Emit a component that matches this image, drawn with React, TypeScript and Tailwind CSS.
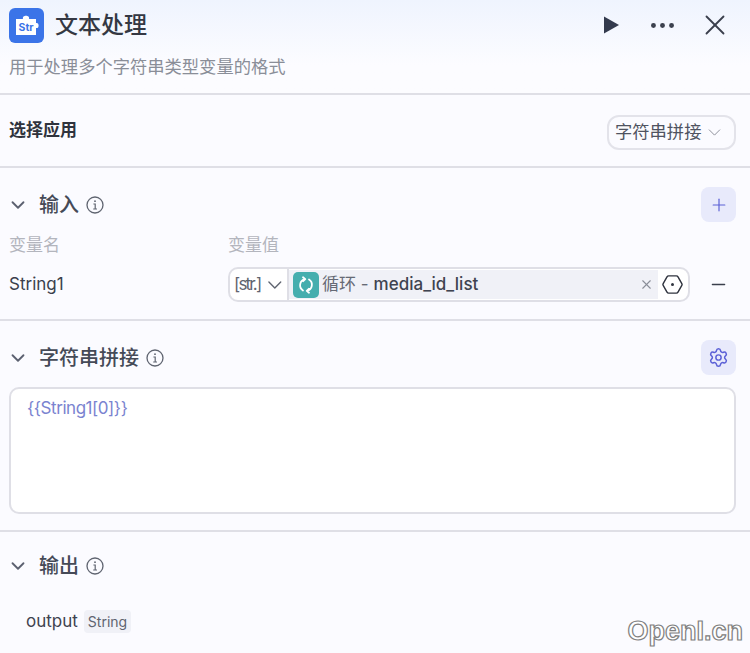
import React from 'react';
import { ChevronDown, Plus, Minus, Settings, X, Ellipsis, Hexagon } from 'lucide-react';

const InfoMark = () => (
  <svg width="18" height="18" viewBox="0 0 18 18" fill="none" stroke="#5f6470" strokeWidth="1.3" className="ml-[7px]">
    <circle cx="9" cy="9" r="8" />
    <circle cx="9" cy="5.2" r="0.9" fill="#5f6470" stroke="none" />
    <path d="M7.4 8h1.8v5M7.2 13h3.8" strokeWidth="1.2" />
  </svg>
);

const SectionTitle = ({ title }: { title: string }) => (
  <div className="flex items-center">
    <ChevronDown size={22} strokeWidth={2} className="text-[#5b6070] ml-[7px]" />
    <span className="ml-[10px] text-[20px] leading-[34px] font-medium text-[#454a57]">{title}</span>
    <InfoMark />
  </div>
);

const IconTile = ({ children }: { children: React.ReactNode }) => (
  <button className="w-[35px] h-[35px] rounded-lg bg-[#e8eafb] flex items-center justify-center text-[#5b60d6]">
    {children}
  </button>
);

export default function App() {
  return (
    <div className="relative w-[750px] h-[653px] overflow-hidden bg-[#fbfbff] font-['Inter','Noto_Sans_CJK_SC',sans-serif]">
      {/* header */}
      <div className="h-[95px] border-b-2 border-[#dfdfe6] bg-gradient-to-b from-[#eff4fe] to-[#fcfcff] to-70%">
        <div className="flex items-center h-[50px] pl-[9px] pr-[18px]">
          <div className="w-[35px] h-[35px] rounded-md bg-[#3b74e8] flex items-center justify-center">
            <svg width="27" height="27" viewBox="0 0 27 27">
              <path d="M3 7h7c-1.500-4.500 7.500-4.500 6 0h7v4c3.500-1 3.500 6 0 5v7H3z" fill="#ffffff" />
              <text x="13" y="18.500" textAnchor="middle" fontSize="10.500" fontWeight="700" fill="#3b74e8" fontFamily="Inter">Str</text>
            </svg>
          </div>
          <span className="ml-[11px] text-[23px] font-medium text-[#343843]">文本处理</span>
          <div className="ml-auto flex items-center">
            <svg width="15" height="18" viewBox="0 0 15 18"><path d="M0 0.500L15 9L0 17.500z" fill="#333a4d" /></svg>
            <Ellipsis size={31} strokeWidth={1.8} className="ml-[28px] text-[#3a3f4c]" />
            <X size={34} strokeWidth={1.3} className="ml-[20px] text-[#3a3f4c]" />
          </div>
        </div>
        <p className="pl-[9px] mt-[5px] text-[17.300px] leading-[24px] text-[#8a8e98]">用于处理多个字符串类型变量的格式</p>
      </div>

      {/* app select */}
      <div className="h-[73px] border-b-2 border-[#dfdfe6] flex items-center justify-between pl-[9px] pr-[14px]">
        <span className="text-[17px] font-bold text-[#2f333d]">选择应用</span>
        <div className="w-[129px] h-[35px] rounded-xl border-2 border-[#e3e3ea] flex items-center pl-[6px] text-[17.300px] text-[#4f5360] mt-[3px]">
          字符串拼接
          <ChevronDown size={21} strokeWidth={1.100} className="ml-[3px] text-[#8a8e98]" />
        </div>
      </div>

      {/* input */}
      <div className="h-[153px] border-b-2 border-[#dfdfe6] pt-[19px]">
        <div className="flex items-center justify-between pr-[14px]">
          <SectionTitle title="输入" />
          <IconTile><Plus size={20} strokeWidth={1.4} /></IconTile>
        </div>
        <div className="flex mt-[11px] pl-[9px] text-[17px] leading-[24px] text-[#b3b5bd]">
          <span className="w-[219px]">变量名</span>
          <span>变量值</span>
        </div>
        <div className="flex items-center mt-[10px] pl-[9px]">
          <span className="w-[219px] text-[17px] text-[#3a3f4c] mt-[1px]">String1</span>
          <div className="w-[462px] h-[35px] rounded-[10px] border-2 border-[#dfdfe6] bg-white flex items-center">
            <div className="w-[59px] h-full border-r-2 border-[#dfdfe6] flex items-center pl-[4px] text-[#5f6470]">
              <span className="text-[17px] tracking-[-1.800px]">[str.]</span>
              <ChevronDown size={28} strokeWidth={1.400} className="ml-[3px]" />
            </div>
            <div className="flex-1 h-[29px] bg-[#f0f1f7] flex items-center pl-[4px]">
              <div className="w-[26px] h-[26px] rounded-[5px] bg-[#45aeae] flex items-center justify-center">
                <svg width="20" height="18" viewBox="0 0 20 18" fill="none" stroke="#ffffff" strokeWidth="1.800" strokeLinecap="round" strokeLinejoin="round">
                  <path d="M7 14.500A6.200 6.200 0 0 1 9 3.200M7 1.300L9.300 3.200L7.200 5.200" />
                  <path d="M13 3.500A6.200 6.200 0 0 1 11 14.800M13 16.700L10.700 14.800L12.800 12.800" />
                </svg>
              </div>
              <span className="ml-[3px] text-[17px] text-[#666a75]">循环 -</span>
              <span className="ml-[5px] text-[17px] font-medium text-[#3f4350]">media_id_list</span>
              <X size={15} strokeWidth={1.800} className="ml-auto mr-[4px] text-[#8a8e98]" />
            </div>
            <div className="w-[30px] flex items-center pl-[3px] text-[#30343f]">
              <div className="relative flex items-center justify-center">
                <Hexagon size={23} strokeWidth={1.500} className="rotate-90" />
                <span className="absolute w-[3px] h-[3px] rounded-full bg-[#30343f]" />
              </div>
            </div>
          </div>
          <Minus size={21} strokeWidth={1.500} className="ml-[18px] text-[#3a3f4c]" />
        </div>
      </div>

      {/* concat */}
      <div className="h-[211px] border-b-2 border-[#dfdfe6] pt-[19px] pr-[14px]">
        <div className="flex items-center justify-between">
          <SectionTitle title="字符串拼接" />
          <IconTile><Settings size={21} strokeWidth={1.700} /></IconTile>
        </div>
        <div className="ml-[9px] mt-[12px] h-[127px] rounded-[10px] border-2 border-[#dfdfe6] bg-white pl-[16px] pt-[7px] text-[17px] leading-[24px] tracking-[-0.450px] text-[#7a83d0]">
          {'{{String1[0]}}'}
        </div>
      </div>

      {/* output */}
      <div className="pt-[17px]">
        <SectionTitle title="输出" />
        <div className="flex items-center mt-[26px] pl-[26px]">
          <span className="text-[17px] text-[#3f4350]">output</span>
          <span className="ml-[6px] h-[23px] px-[4px] rounded bg-[#f0f1f7] text-[14px] leading-[23px] text-[#5f6470]">String</span>
        </div>
      </div>

      {/* watermark */}
      <span className="absolute right-[7px] bottom-[2px] text-[27px] font-bold font-['Liberation_Sans',sans-serif] text-white [-webkit-text-stroke:1.200px_#808080]">
        OpenI.cn
      </span>
    </div>
  );
}
